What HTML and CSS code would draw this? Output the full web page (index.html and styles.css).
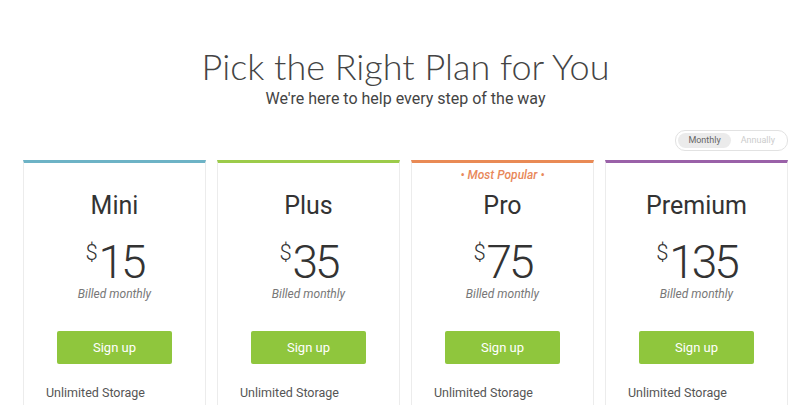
FILE: index.html
```html
<!DOCTYPE html>
<html lang="en">

<head>
  <meta charset="UTF-8">
  <title>Pricing</title>
  <link rel="stylesheet" href="styles.css">
</head>

<body>

  <div class="page">
    <h1 class="title">Pick the Right Plan for You</h1>
    <p class="subtitle">We're here to help every step of the way</p>

    <div class="toggle-row">
      <div class="toggle">
        <span class="toggle-opt active">Monthly</span>
        <span class="toggle-opt">Annually</span>
      </div>
    </div>

    <div class="plans">
      <div class="plan plan-mini">
        <div class="tag"></div>
        <h3 class="plan-name">Mini</h3>
        <div class="price"><span class="cur">$</span>15</div>
        <div class="billed">Billed monthly</div>
        <a class="btn" href="#">Sign up</a>
        <div class="feature">Unlimited Storage</div>
      </div>

      <div class="plan plan-plus">
        <div class="tag"></div>
        <h3 class="plan-name">Plus</h3>
        <div class="price"><span class="cur">$</span>35</div>
        <div class="billed">Billed monthly</div>
        <a class="btn" href="#">Sign up</a>
        <div class="feature">Unlimited Storage</div>
      </div>

      <div class="plan plan-pro">
        <div class="tag">&bull; Most Popular &bull;</div>
        <h3 class="plan-name">Pro</h3>
        <div class="price"><span class="cur">$</span>75</div>
        <div class="billed">Billed monthly</div>
        <a class="btn" href="#">Sign up</a>
        <div class="feature">Unlimited Storage</div>
      </div>

      <div class="plan plan-premium">
        <div class="tag"></div>
        <h3 class="plan-name">Premium</h3>
        <div class="price"><span class="cur">$</span>135</div>
        <div class="billed">Billed monthly</div>
        <a class="btn" href="#">Sign up</a>
        <div class="feature">Unlimited Storage</div>
      </div>
    </div>
  </div>

</body>

</html>
```

FILE: styles.css
```css
body {
  margin: 0;
  font-family: Roboto, "Liberation Sans", sans-serif;
  color: #333;
  background: #fff;
}

.page {
  width: 765px;
  margin-left: 23px;
  padding-top: 42px;
}

.title {
  margin: 0;
  text-align: center;
  font-family: Lato, sans-serif;
  font-weight: 300;
  font-size: 36px;
  line-height: 48px;
  color: #444;
}

.subtitle {
  margin: 0;
  text-align: center;
  font-size: 16px;
  line-height: 18px;
  color: #444;
}

.toggle-row {
  display: flex;
  justify-content: flex-end;
  margin-top: 22px;
}

.toggle {
  display: flex;
  padding: 2px;
  border: 1px solid #e2e2e2;
  border-radius: 10px;
  font-size: 9px;
}

.toggle-opt {
  padding: 2px 10px 3px;
  border-radius: 8px;
  color: #ccc;
}

.toggle-opt.active {
  background: #ebebeb;
  color: #666;
}

.plans {
  display: grid;
  grid-template-columns: repeat(4, 1fr);
  gap: 11px;
  margin-top: 9px;
}

.plan {
  display: flex;
  flex-direction: column;
  align-items: center;
  border: 1px solid #ececec;
  border-top: 3px solid #6db3c6;
  height: 260px;
}

.plan-plus { border-top-color: #9ccb4a; }
.plan-pro { border-top-color: #e98a55; }
.plan-premium { border-top-color: #9a61a8; }

.tag {
  height: 14px;
  margin-top: 5px;
  font-size: 12px;
  font-style: italic;
  font-weight: 500;
  color: #e8885a;
}

.plan-name {
  margin: 9px 0 0;
  font-weight: 400;
  font-size: 25px;
  line-height: 30px;
  color: #333;
}

.price {
  margin-top: 8px;
  font-size: 46px;
  font-weight: 300;
  letter-spacing: -3px;
  line-height: 48px;
  color: #333;
}

.cur {
  font-size: 22px;
  letter-spacing: 0;
  vertical-align: 18px;
  margin-right: 1px;
}

.billed {
  margin-top: 1px;
  font-size: 12px;
  line-height: 15px;
  font-style: italic;
  color: #777;
}

.btn {
  display: block;
  width: 115px;
  margin-top: 29px;
  padding: 9px 0;
  text-align: center;
  background: #8fc63d;
  border-radius: 2px;
  color: #fff;
  font-size: 13px;
  text-decoration: none;
}

.feature {
  align-self: flex-start;
  margin: 21px 0 0 22px;
  font-size: 12.5px;
  color: #555;
}
```
